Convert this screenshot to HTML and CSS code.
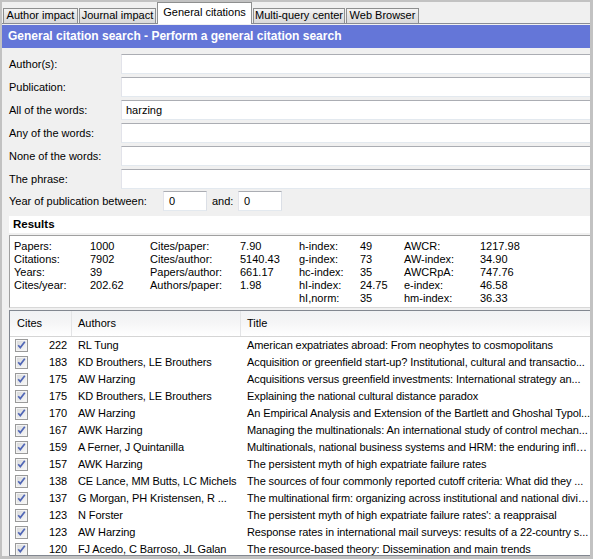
FILE: index.html
```html
<!DOCTYPE html>
<html lang="en">
<head>
    <meta charset="UTF-8">
    <title>General citations</title>
    <link rel="stylesheet" href="styles.css">
</head>
<body>
<div class="window">
    <div class="tabs">
        <div class="tab tab-author">Author impact</div>
        <div class="tab tab-journal">Journal impact</div>
        <div class="tab tab-general active">General citations</div>
        <div class="tab tab-multi">Multi-query center</div>
        <div class="tab tab-web">Web Browser</div>
    </div>

    <div class="title-bar">General citation search - Perform a general citation search</div>

    <div class="query">
        <div class="field"><span class="field-label">Author(s):</span><div class="box"></div></div>
        <div class="field"><span class="field-label">Publication:</span><div class="box"></div></div>
        <div class="field"><span class="field-label">All of the words:</span><div class="box">harzing</div></div>
        <div class="field"><span class="field-label">Any of the words:</span><div class="box"></div></div>
        <div class="field"><span class="field-label">None of the words:</span><div class="box"></div></div>
        <div class="field last"><span class="field-label">The phrase:</span><div class="box"></div></div>
        <div class="year-row">
            <span class="year-label">Year of publication between:</span>
            <div class="box small">0</div>
            <span class="and-label">and:</span>
            <div class="box small">0</div>
        </div>
    </div>

    <div class="results-head">Results</div>

    <!-- summary metrics, four label/value groups -->
    <div class="stats">
        <div class="stat-group g1">
            <span>Papers:</span><span>1000</span>
            <span>Citations:</span><span>7902</span>
            <span>Years:</span><span>39</span>
            <span>Cites/year:</span><span>202.62</span>
        </div>
        <div class="stat-group g2">
            <span>Cites/paper:</span><span>7.90</span>
            <span>Cites/author:</span><span>5140.43</span>
            <span>Papers/author:</span><span>661.17</span>
            <span>Authors/paper:</span><span>1.98</span>
        </div>
        <div class="stat-group g3">
            <span>h-index:</span><span>49</span>
            <span>g-index:</span><span>73</span>
            <span>hc-index:</span><span>35</span>
            <span>hI-index:</span><span>24.75</span>
            <span>hI,norm:</span><span>35</span>
        </div>
        <div class="stat-group g4">
            <span>AWCR:</span><span>1217.98</span>
            <span>AW-index:</span><span>34.90</span>
            <span>AWCRpA:</span><span>747.76</span>
            <span>e-index:</span><span>46.58</span>
            <span>hm-index:</span><span>36.33</span>
        </div>
    </div>

    <div class="list">
        <div class="list-head">
            <div class="col-cites">Cites</div>
            <div class="col-authors">Authors</div>
            <div class="col-title">Title</div>
        </div>
        <div id="rows"></div>
    </div>
</div>
<script src="script.js"></script>
</body>
</html>
```

FILE: styles.css
```css
/* outer window frame */
body {
    margin: 0;
    background-color: #c2c2c2;
    font-family: "Liberation Sans", Arial, sans-serif;
    font-size: 11px;
    color: #000;
}

.window {
    width: 588px;
    height: 554px;
    margin: 2px 3px 3px 2px;
    background-color: #f0f0f0;
    overflow: hidden;
    display: flex;
    flex-direction: column;
}

/* tab strip */
.tabs {
    flex: none;
    height: 21px;
    display: flex;
    align-items: flex-end;
    gap: 1px;
    padding-left: 1px;
    border-bottom: 1px solid #898c95;
    margin-bottom: 1px;
}

.tab {
    box-sizing: border-box;
    height: 15px;
    border: 1px solid #8e8f8f;
    border-bottom: none;
    background: linear-gradient(#f4f4f4, #e4e4e4 50%, #dadada);
    text-align: center;
    line-height: 13px;
    white-space: nowrap;
}

.tab.active {
    height: 22px;
    margin-bottom: -1px;
    background: #fff;
    line-height: 18px;
    position: relative;
}

.tab-author { width: 75px; }
.tab-journal { width: 77px; }
.tab-general { width: 95px; }
.tab-multi { width: 92px; }
.tab-web { width: 73px; }

/* blue header */
.title-bar {
    flex: none;
    height: 23px;
    line-height: 23px;
    padding-left: 6px;
    background-color: #6476d8;
    color: #fff;
    font-weight: bold;
    font-size: 12px;
}

/* query form */
.query {
    flex: none;
    padding: 6px 0 5px 7px;
}

.field {
    display: flex;
    align-items: center;
    height: 20px;
    margin-bottom: 3px;
}

.field.last {
    margin-bottom: 2px;
}

.field-label {
    width: 112px;
    flex: none;
}

.box {
    flex: 1;
    box-sizing: border-box;
    height: 20px;
    line-height: 18px;
    padding-left: 4px;
    background: #fff;
    border: 1px solid;
    border-color: #abadb3 #dbdfe6 #e3e9ef #e2e3ea;
    margin-right: -4px;
    white-space: nowrap;
}

.year-row {
    display: flex;
    align-items: center;
    height: 20px;
}

.year-label {
    width: 154px;
    flex: none;
}

.box.small {
    flex: none;
    width: 44px;
    margin-right: 0;
    padding-left: 5px;
}

.and-label {
    width: 31px;
    padding-left: 5px;
    box-sizing: border-box;
    flex: none;
}

/* results */
.results-head {
    flex: none;
    height: 17px;
    line-height: 17px;
    margin-left: 7px;
    padding-left: 4px;
    background: #fff;
    font-weight: bold;
    font-size: 11.5px;
}

.stats {
    flex: none;
    height: 65px;
    margin: 2px -3px 0 7px;
    padding: 4px 0 2px 4px;
    background: #fff;
    border: 1px solid #a0a0a0;
    border-color: #a0a0a0 #e3e3e3 #d8d8d8 #a0a0a0;
    display: flex;
    line-height: 13px;
}

.stat-group {
    display: grid;
    align-content: start;
}

.stat-group span {
    white-space: nowrap;
}

.g1 { grid-template-columns: 76px 60px; }
.g2 { grid-template-columns: 90px 59px; }
.g3 { grid-template-columns: 61px 44px; }
.g4 { grid-template-columns: 76px 80px; }

/* publication list */
.list {
    flex: 1;
    min-height: 0;
    margin: 2px -3px 0 7px;
    background: #fff;
    border: 1px solid #828790;
    overflow: hidden;
    letter-spacing: -0.1px;
}

.list-head {
    display: flex;
    height: 25px;
    line-height: 25px;
    border-bottom: 1px solid #d5d5d5;
    background: linear-gradient(#f1f2f4, #f5f5f6 45%, #ffffff);
    letter-spacing: 0;
}

.list-head div {
    box-sizing: border-box;
    border-right: 1px solid #e3e4e6;
}

.col-cites {
    flex: none;
    width: 62px;
    padding-left: 7px;
}

.col-authors {
    flex: none;
    width: 169px;
    padding-left: 6px;
    white-space: nowrap;
    overflow: hidden;
}

.col-title {
    flex: 1;
    min-width: 0;
    padding-left: 6px;
    padding-right: 2px;
    white-space: nowrap;
    overflow: hidden;
    text-overflow: ellipsis;
}

.row {
    display: flex;
    height: 17px;
    line-height: 17px;
}

.row .col-cites {
    display: flex;
    align-items: center;
    justify-content: space-between;
    padding: 0 5px 0 5px;
    box-sizing: border-box;
}

.row .col-authors,
.row .col-title {
    box-sizing: border-box;
}

.check {
    width: 13px;
    height: 13px;
    display: block;
}
```

FILE: script.js
```js
const papers = [
    [222, 'RL Tung', 'American expatriates abroad: From neophytes to cosmopolitans'],
    [183, 'KD Brouthers, LE Brouthers', 'Acquisition or greenfield start-up? Institutional, cultural and transactio...'],
    [175, 'AW Harzing', 'Acquisitions versus greenfield investments: International strategy an...'],
    [175, 'KD Brouthers, LE Brouthers', 'Explaining the national cultural distance paradox'],
    [170, 'AW Harzing', 'An Empirical Analysis and Extension of the Bartlett and Ghoshal Typol...'],
    [167, 'AWK Harzing', 'Managing the multinationals: An international study of control mechan...'],
    [159, 'A Ferner, J Quintanilla', 'Multinationals, national business systems and HRM: the enduring influ...'],
    [157, 'AWK Harzing', 'The persistent myth of high expatriate failure rates'],
    [138, 'CE Lance, MM Butts, LC Michels', 'The sources of four commonly reported cutoff criteria: What did they ...'],
    [137, 'G Morgan, PH Kristensen, R ...', 'The multinational firm: organizing across institutional and national divides'],
    [123, 'N Forster', "The persistent myth of high expatriate failure rates': a reappraisal"],
    [123, 'AW Harzing', 'Response rates in international mail surveys: results of a 22-country s...'],
    [120, 'FJ Acedo, C Barroso, JL Galan', 'The resource-based theory: Dissemination and main trends']
];

// checked box, drawn as svg
const checkSvg = '<svg class="check" viewBox="0 0 13 13">' +
    '<defs><linearGradient id="cb" x1="0" y1="0" x2="1" y2="1">' +
    '<stop offset="0" stop-color="#d9dadb"/><stop offset="1" stop-color="#f7f7f7"/></linearGradient></defs>' +
    '<rect x="0.5" y="0.5" width="12" height="12" fill="#f4f4f4" stroke="#9a9a9a"/>' +
    '<rect x="2" y="2" width="9" height="9" fill="url(#cb)"/>' +
    '<path d="M3.2 6.2 L5.3 8.6 L9.8 2.8" fill="none" stroke="#5066b6" stroke-width="1.7"/>' +
    '</svg>';

const rows = document.getElementById('rows');
papers.forEach(p => {
    let row = document.createElement('div');
    row.className = 'row';
    row.innerHTML = '<div class="col-cites">' + checkSvg + '<span>' + p[0] + '</span></div>' +
        '<div class="col-authors">' + p[1] + '</div>' +
        '<div class="col-title">' + p[2] + '</div>';
    rows.appendChild(row);
});
```
